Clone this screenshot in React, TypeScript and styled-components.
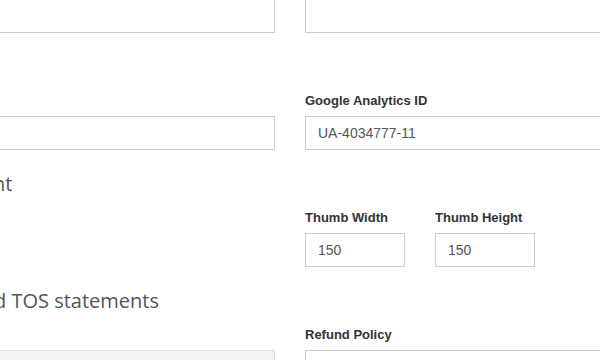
import React from "react";
import styled, { createGlobalStyle } from "styled-components";

const Global = createGlobalStyle`
  html, body { margin: 0; padding: 0; background: #ffffff; overflow: hidden; }
  * { box-sizing: border-box; }
`;

const Page = styled.div`
  display: grid;
  grid-template-columns: 300px 300px;
  column-gap: 30px;
  margin-left: -25px;
  margin-top: -1px;
  width: 630px;
  height: 361px;
  overflow: hidden;
  font-family: "Liberation Sans", Arial, sans-serif;
`;

const Column = styled.div`
  display: flex;
  flex-direction: column;
`;

const Group = styled.div<{ $top?: number }>`
  display: flex;
  flex-direction: column;
  margin-top: ${(p) => p.$top ?? 0}px;
`;

const Row = styled.div<{ $top?: number }>`
  display: flex;
  gap: 30px;
  margin-top: ${(p) => p.$top ?? 0}px;
`;

const Label = styled.label`
  display: block;
  font-size: 13px;
  line-height: 20px;
  font-weight: bold;
  color: #333333;
  margin-bottom: 5px;
  white-space: nowrap;
  min-height: 20px;
`;

const Input = styled.div<{ $width?: number }>`
  flex: none;
  height: 34px;
  width: ${(p) => (p.$width ? `${p.$width}px` : "100%")};
  border: 1px solid #cccccc;
  background: #ffffff;
  padding: 6px 12px;
  font-size: 14px;
  line-height: 20px;
  color: #555555;
  white-space: nowrap;
`;

const Heading = styled.h3<{ $top: number; $indent: number }>`
  margin: ${(p) => p.$top}px 0 0 0;
  padding-left: ${(p) => p.$indent}px;
  font-family: "Open Sans", sans-serif;
  font-weight: 400;
  font-size: 20px;
  line-height: 22px;
  color: #555555;
  white-space: nowrap;
`;

const Preview = styled.div<{ $top: number }>`
  flex: none;
  margin-top: ${(p) => p.$top}px;
  height: 60px;
  background: #f2f2f2;
  border: 1px solid #dddddd;
`;

export default function App() {
  return (
    <>
      <Global />
      <Page>
        <Column>
          <Input />
          <Group $top={58}>
            <Label>&nbsp;</Label>
            <Input />
          </Group>
          <Heading $top={23} $indent={18}>nt</Heading>
          <Heading $top={95} $indent={19}>d TOS statements</Heading>
          <Preview $top={38} />
        </Column>
        <Column>
          <Input />
          <Group $top={58}>
            <Label>Google Analytics ID</Label>
            <Input>UA-4034777-11</Input>
          </Group>
          <Row $top={58}>
            <Group>
              <Label>Thumb Width</Label>
              <Input $width={100}>150</Input>
            </Group>
            <Group>
              <Label>Thumb Height</Label>
              <Input $width={100}>150</Input>
            </Group>
          </Row>
          <Group $top={58}>
            <Label>Refund Policy</Label>
            <Input />
          </Group>
        </Column>
      </Page>
    </>
  );
}
